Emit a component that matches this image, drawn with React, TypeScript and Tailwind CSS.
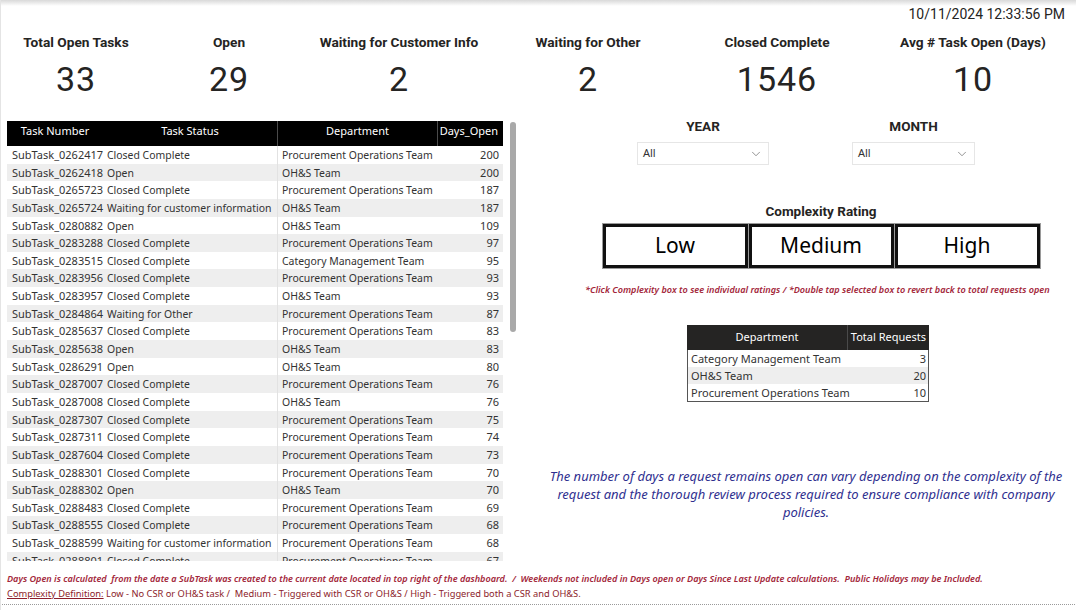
import { ChevronDown } from 'lucide-react';

// Headline numbers across the top
const KPIS = [
  { label: 'Total Open Tasks', value: '33', width: 'w-[152px]' },
  { label: 'Open', value: '29', width: 'w-[154px]' },
  { label: 'Waiting for Customer Info', value: '2', width: 'w-[186px]' },
  { label: 'Waiting for Other', value: '2', width: 'w-[192px]' },
  { label: 'Closed Complete', value: '1546', width: 'w-[186px]' },
  { label: 'Avg # Task Open (Days)', value: '10', width: 'w-[206px]' },
];

const TASKS: [string, string, string, number][] = [
  ['SubTask_0262417', 'Closed Complete', 'Procurement Operations Team', 200],
  ['SubTask_0262418', 'Open', 'OH&S Team', 200],
  ['SubTask_0265723', 'Closed Complete', 'Procurement Operations Team', 187],
  ['SubTask_0265724', 'Waiting for customer information', 'OH&S Team', 187],
  ['SubTask_0280882', 'Open', 'OH&S Team', 109],
  ['SubTask_0283288', 'Closed Complete', 'Procurement Operations Team', 97],
  ['SubTask_0283515', 'Closed Complete', 'Category Management Team', 95],
  ['SubTask_0283956', 'Closed Complete', 'Procurement Operations Team', 93],
  ['SubTask_0283957', 'Closed Complete', 'OH&S Team', 93],
  ['SubTask_0284864', 'Waiting for Other', 'Procurement Operations Team', 87],
  ['SubTask_0285637', 'Closed Complete', 'Procurement Operations Team', 83],
  ['SubTask_0285638', 'Open', 'OH&S Team', 83],
  ['SubTask_0286291', 'Open', 'OH&S Team', 80],
  ['SubTask_0287007', 'Closed Complete', 'Procurement Operations Team', 76],
  ['SubTask_0287008', 'Closed Complete', 'OH&S Team', 76],
  ['SubTask_0287307', 'Closed Complete', 'Procurement Operations Team', 75],
  ['SubTask_0287311', 'Closed Complete', 'Procurement Operations Team', 74],
  ['SubTask_0287604', 'Closed Complete', 'Procurement Operations Team', 73],
  ['SubTask_0288301', 'Closed Complete', 'Procurement Operations Team', 70],
  ['SubTask_0288302', 'Open', 'OH&S Team', 70],
  ['SubTask_0288483', 'Closed Complete', 'Procurement Operations Team', 69],
  ['SubTask_0288555', 'Closed Complete', 'Procurement Operations Team', 68],
  ['SubTask_0288599', 'Waiting for customer information', 'Procurement Operations Team', 68],
  ['SubTask_0288801', 'Closed Complete', 'Procurement Operations Team', 67],
];

const DEPARTMENTS: [string, number][] = [
  ['Category Management Team', 3],
  ['OH&S Team', 20],
  ['Procurement Operations Team', 10],
];

const din = "font-['Roboto',sans-serif]";
const segoe = "font-['Noto_Sans',sans-serif]";

const Filter = ({ label, width }: { label: string; width: string }) => (
  <div className={`flex flex-col items-center ${width}`}>
    <span className={`${din} text-[13.5px] leading-[16px] font-bold text-[#252423]`}>{label}</span>
    <div className="mt-[8px] w-full h-[23px] border border-[#e6e6e6] flex items-center justify-between pl-[5px] pr-[5px]">
      <span className={`${segoe} text-[11px] text-[#333]`}>All</span>
      <ChevronDown className="w-[14px] h-[14px] text-[#666]" strokeWidth={1.2} />
    </div>
  </div>
);

export default function App() {
  return (
    <div className="relative w-[1076px] h-[610px] bg-white overflow-hidden border-l border-[#e4e4e4] text-[#252423]">
      {/* top shadow */}
      <div className="absolute top-0 inset-x-0 h-[6px] bg-gradient-to-b from-[#d9d9d9] to-transparent" />

      {/* Timestamp */}
      <div className="h-[28px] pt-[5px] pr-[11px] flex justify-end">
        <span className={`${din} text-[14px] leading-[18px] text-[#252423]`}>10/11/2024 12:33:56 PM</span>
      </div>

      {/* KPI cards */}
      <div className="flex h-[90px] -ml-[1px]">
        {KPIS.map((k) => (
          <div key={k.label} className={`${k.width} flex flex-col items-center pt-[5px]`}>
            <span className={`${din} text-[13.7px] leading-[18px] font-bold`}>{k.label}</span>
            <span className={`${din} mt-[8px] text-[34px] leading-[40px] tracking-[1px]`}>{k.value}</span>
          </div>
        ))}
      </div>

      {/* Main area */}
      <div className="flex h-[450px]">
        {/* Task table with scrollbar */}
        <div className="flex gap-[7px] pl-[6px] pt-[3px]">
          <div className={`${segoe} w-[496px] h-[440px] overflow-hidden text-[11px] text-[#333]`}>
            <div className="grid grid-cols-[96px_174px_160px_66px] bg-black text-white h-[25px] leading-[20px]">
              <div className="text-center">Task Number</div>
              <div className="text-center">Task Status</div>
              <div className="text-center border-l border-[#4a4a4a]">Department</div>
              <div className="text-right pr-[5px] border-l border-[#4a4a4a]">Days_Open</div>
            </div>
            {TASKS.map((t, i) => (
              <div
                key={t[0]}
                className={`grid grid-cols-[96px_174px_160px_66px] h-[17.65px] leading-[18.4px] whitespace-nowrap ${
                  i % 2 === 1 ? 'bg-[#eeeeee]' : 'bg-white'
                }`}
              >
                <div className="pl-[5px]">{t[0]}</div>
                <div className="pl-[4px] text-[10.45px]">{t[1]}</div>
                <div className="pl-[4px] text-[10.45px] border-l border-[#e2e2e2]">{t[2]}</div>
                <div className="text-right pr-[4px]">{t[3]}</div>
              </div>
            ))}
          </div>
          <div className="w-[6px] h-[210px] mt-[1px] rounded-full bg-[#a9a9a9]" />
        </div>

        {/* Right panel */}
        <div className="flex-1 flex flex-col">
          <div className="flex pl-[121px] gap-[83px]">
            <Filter label="YEAR" width="w-[132px]" />
            <Filter label="MONTH" width="w-[123px]" />
          </div>

          <div className="ml-[85px] w-[440px] mt-[38px] flex flex-col items-center">
            <span className={`${din} text-[13.5px] leading-[16px] font-bold`}>Complexity Rating</span>
            <div className="mt-[5px] flex gap-[1px]">
              {['Low', 'Medium', 'High'].map((c) => (
                <div
                  key={c}
                  className={`${segoe} w-[145px] h-[44px] border-[3px] border-[#111] outline outline-1 outline-[#9a9a9a] flex items-center justify-center text-[21px] text-black`}
                >
                  {c}
                </div>
              ))}
            </div>
          </div>

          <p className={`${segoe} mt-[16px] ml-[69px] text-[9.1px] leading-[12px] italic font-semibold text-[#a3263a] whitespace-nowrap`}>
            *Click Complexity box to see individual ratings / *Double tap selected box to revert back to total requests open
          </p>

          {/* Department summary */}
          <div className={`${segoe} ml-[171px] mt-[29px] w-[242px] text-[11px] text-[#333]`}>
            <div className="grid grid-cols-[160px_82px] bg-[#252423] text-white h-[25px] leading-[24px]">
              <div className="text-center">Department</div>
              <div className="text-right pr-[3px] border-l border-[#4a4a4a]">Total Requests</div>
            </div>
            <div className="border border-[#555] border-t-0">
              {DEPARTMENTS.map((d, i) => (
                <div
                  key={d[0]}
                  className={`grid grid-cols-[160px_80px] h-[17px] leading-[17px] ${i % 2 === 1 ? 'bg-[#eeeeee]' : 'bg-white'}`}
                >
                  <div className="pl-[3px] whitespace-nowrap">{d[0]}</div>
                  <div className="text-right pr-[2px]">{d[1]}</div>
                </div>
              ))}
            </div>
          </div>

          <p className={`${segoe} mt-[65px] ml-[27px] w-[526px] text-center text-[13px] leading-[18px] italic text-[#2f2f8f]`}>
            The number of days a request remains open can vary depending on the complexity of the request and the thorough
            review process required to ensure compliance with company policies.
          </p>
        </div>
      </div>

      {/* Footer notes */}
      <div className={`${segoe} pl-[6px] pt-[3px] leading-[15px]`}>
        <p className="text-[9.1px] italic font-semibold text-[#a3263a] whitespace-pre">
          {'Days Open is calculated  from the date a SubTask was created to the current date located in top right of the dashboard.  /  Weekends not included in Days open or Days Since Last Update calculations.  Public Holidays may be Included.'}
        </p>
        <p className="text-[9.3px] text-[#8c1c2a] whitespace-pre">
          <span className="underline">Complexity Definition:</span>
          {' Low - No CSR or OH&S task /  Medium - Triggered with CSR or OH&S / High - Triggered both a CSR and OH&S.'}
        </p>
      </div>
      <div className="mx-[1px] mt-[3px] border-t border-dotted border-[#9a9a9a]" />
    </div>
  );
}
